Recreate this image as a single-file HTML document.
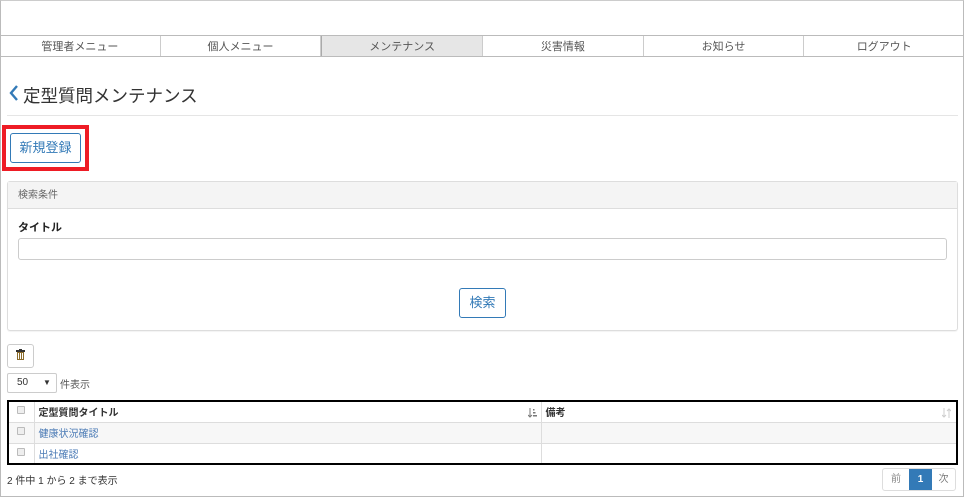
<!DOCTYPE html>
<html><head><meta charset="utf-8"><style>
*{box-sizing:border-box;margin:0;padding:0}
body{width:965px;height:497px;overflow:hidden;background:#fff;font-family:"Liberation Sans","Noto Sans CJK JP",sans-serif;color:#333;position:relative}
.abs{position:absolute}
.frame{left:0;top:0;width:964px;height:497px;border-left:1px solid #bbb;border-right:1px solid #bbb;border-bottom:1px solid #bbb;border-top:1px solid #ccc}
.nav{left:0;top:35px;width:964px;height:22px;display:flex;border-top:1px solid #bbb;border-bottom:1px solid #bbb}
.nav div{flex:1;text-align:center;font-size:11px;line-height:20px;padding-top:1px;color:#555;border-right:1px solid #ccc}
.nav div.on{background:#e6e6e6;border-left:1px solid #aaa}
.nav div:last-child{border-right:none}
.btn{border:1px solid #337ab7;border-radius:3px;color:#337ab7;background:#fff;text-align:center}
td,th{border:1px solid #ddd;font-size:10px;height:21px;padding:0 0 0 4px;text-align:left}
.cb{display:inline-block;width:8px;height:8px;border:1px solid #bbb;background:#eee;border-radius:1px}
</style></head><body>
<div class="abs frame"></div>
<div class="abs nav"><div>管理者メニュー</div><div>個人メニュー</div><div class="on">メンテナンス</div><div>災害情報</div><div>お知らせ</div><div>ログアウト</div></div>
<svg class="abs" style="left:9px;top:85px" width="10" height="16"><path d="M8 1 L2 8 L8 15" stroke="#337ab7" stroke-width="2.4" fill="none"/></svg>
<div class="abs" style="left:23px;top:83px;font-size:17.5px;color:#333">定型質問メンテナンス</div>
<div class="abs" style="left:7px;top:115px;width:951px;height:1px;background:#e5e5e5"></div>
<div class="abs" style="left:2px;top:125px;width:87px;height:46px;background:#ee1c25"></div>
<div class="abs" style="left:6px;top:129px;width:79px;height:38px;background:#fff"></div>
<div class="abs btn" style="left:10px;top:133px;width:71px;height:30px;line-height:28px;font-size:13px">新規登録</div>
<div class="abs" style="left:7px;top:181px;width:951px;height:150px;border:1px solid #ddd;border-radius:3px;box-shadow:0 1px 1px rgba(0,0,0,.05)">
 <div style="height:27px;background:#f4f4f4;border-bottom:1px solid #ddd;font-size:10px;color:#666;line-height:28px;padding-left:10px">検索条件</div>
 <div class="abs" style="left:10px;top:37px;font-size:11px;font-weight:bold;color:#222">タイトル</div>
 <div class="abs" style="left:10px;top:56px;width:929px;height:22px;border:1px solid #ccc;border-radius:3px"></div>
 <div class="abs btn" style="left:451px;top:106px;width:47px;height:30px;line-height:28px;font-size:13px">検索</div>
</div>
<div class="abs" style="left:7px;top:344px;width:27px;height:24px;border:1px solid #ccc;border-radius:3px"></div>
<svg class="abs" style="left:16px;top:349px" width="9" height="11"><rect x="0" y="1" width="9" height="2" fill="#333"/><rect x="3" y="0" width="3" height="1" fill="#333"/><rect x="1" y="3" width="7" height="8" fill="#8a6b2a"/><rect x="2" y="4" width="1" height="6" fill="#fff"/><rect x="4" y="4" width="1" height="6" fill="#fff"/><rect x="6" y="4" width="1" height="6" fill="#fff"/></svg>
<div class="abs" style="left:7px;top:373px;width:50px;height:20px;border:1px solid #ccc;border-radius:2px;font-size:10px;line-height:18px;padding-left:9px">50<span style="position:absolute;left:35px;font-size:8px">▼</span></div>
<div class="abs" style="left:60px;top:376px;font-size:10px;color:#555">件表示</div>
<table class="abs" style="left:7px;top:400px;width:951px;border-collapse:collapse;border:2px solid #000">
<tr><th style="width:26px;text-align:center;padding:0"><span class="cb"></span></th><th style="width:507px;position:relative">定型質問タイトル<svg style="position:absolute;right:4px;top:6px" width="9" height="10"><path d="M2 0V9M0 7L2 9L4 7" stroke="#777" fill="none"/><rect x="5" y="1" width="1.5" height="1.5" fill="#777"/><rect x="5" y="4" width="2.5" height="1.5" fill="#777"/><rect x="5" y="7" width="4" height="1.5" fill="#777"/></svg></th><th style="position:relative">備考<svg style="position:absolute;right:5px;top:6px" width="9" height="10"><path d="M2 0V9M0 7L2 9L4 7M7 10V1M5 3L7 1L9 3" stroke="#ccc" fill="none"/></svg></th></tr>
<tr style="background:#f7f7f7"><td style="text-align:center;padding:0"><span class="cb"></span></td><td style="color:#4a7ab5">健康状況確認</td><td></td></tr>
<tr><td style="text-align:center;padding:0"><span class="cb"></span></td><td style="color:#4a7ab5">出社確認</td><td></td></tr>
</table>
<div class="abs" style="left:7px;top:472px;font-size:10px;color:#333">2 件中 1 から 2 まで表示</div>
<div class="abs" style="left:882px;top:468px;width:74px;height:23px;border:1px solid #ddd;border-radius:3px;display:flex;font-size:10px;line-height:21px;text-align:center">
<div style="width:26px;color:#888">前</div><div style="width:23px;background:#337ab7;color:#fff;font-weight:bold">1</div><div style="flex:1;color:#777">次</div></div>
</body></html>
